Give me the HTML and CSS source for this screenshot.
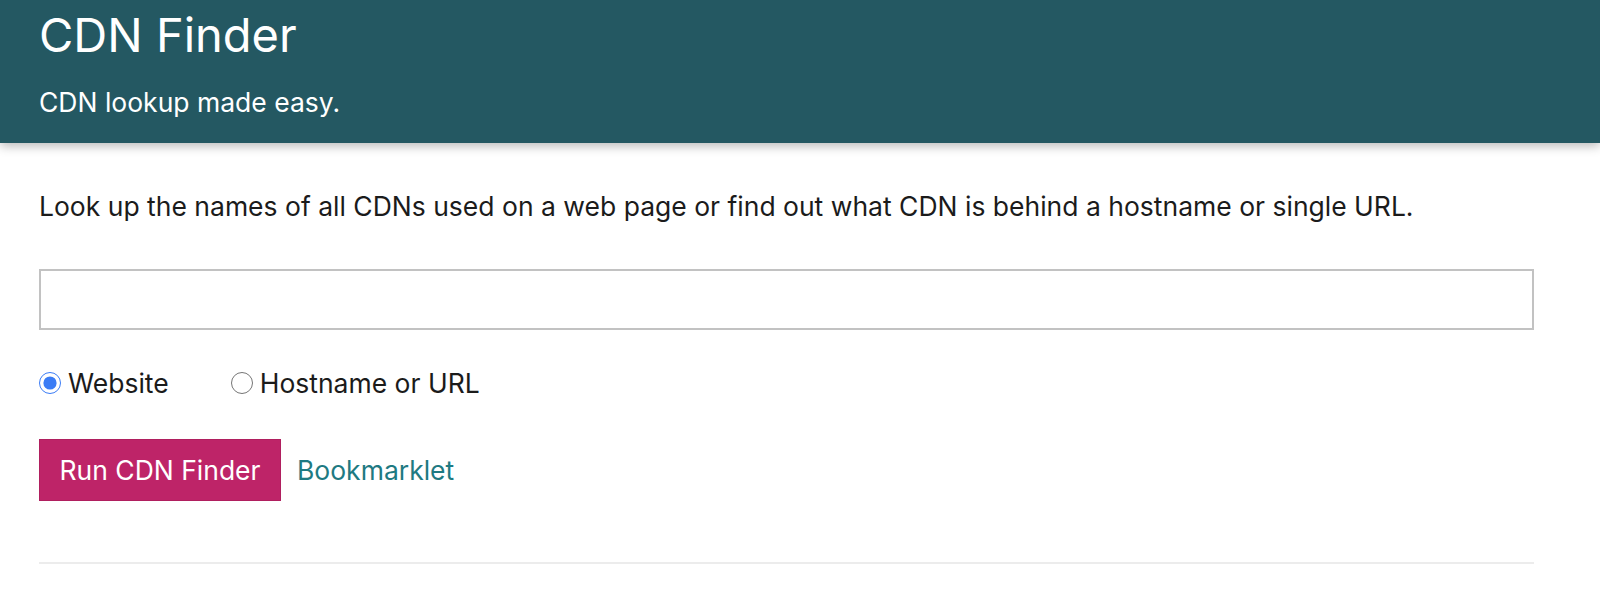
FILE: index.html
```html
<!DOCTYPE html>
<html lang="en">
<head>
<meta charset="utf-8">
<title>CDN Finder</title>
<link rel="stylesheet" href="styles.css">
</head>
<body>
<header class="site-header">
  <div class="wrap">
    <h1 class="title">CDN Finder</h1>
    <p class="tagline">CDN lookup made easy.</p>
  </div>
</header>
<main class="wrap content">
  <p class="intro">Look up the names of all CDNs used on a web page or find out what CDN is behind a hostname or single URL.</p>
  <form class="finder">
    <input class="url-input" type="text" aria-label="URL">
    <div class="modes">
      <label class="mode"><input type="radio" name="mode" checked> Website</label>
      <label class="mode"><input type="radio" name="mode"> Hostname or URL</label>
    </div>
    <div class="actions">
      <button type="button" class="run">Run CDN Finder</button>
      <a class="bookmarklet" href="#">Bookmarklet</a>
    </div>
  </form>
  <hr class="divider">
</main>
</body>
</html>
```
FILE: styles.css
```css
html, body {
  margin: 0;
  padding: 0;
  background: #ffffff;
}
body {
  font-family: Inter, "Noto Sans", sans-serif;
  color: #1b1b1b;
  font-size: 26.5px;
  line-height: 40px;
}
.wrap {
  width: 1495px;
  margin-left: 39px;
}
.site-header {
  background: #245862;
  color: #ffffff;
  height: 143px;
  box-sizing: border-box;
  padding-top: 7px;
  box-shadow: 0 3px 10px rgba(0,0,0,0.28);
  position: relative;
}
.title {
  margin: 0;
  font-size: 47px;
  line-height: 56px;
  font-weight: 400;
}
.tagline {
  margin: 19px 0 0;
}
.content {
  padding-top: 43px;
}
.intro {
  margin: 0;
}
.finder {
  margin-top: 43px;
}
.url-input {
  display: block;
  box-sizing: border-box;
  width: 1495px;
  height: 61px;
  border: 2px solid #c2c2c2;
  border-radius: 0;
  margin: 0;
  padding: 0 12px;
  font: inherit;
}
.modes {
  display: flex;
  gap: 62px;
  margin-top: 33px;
}
.mode {
  display: flex;
  align-items: center;
  gap: 7px;
}
.mode input {
  margin: 0;
  width: 22px;
  height: 22px;
  accent-color: #3b7cf5;
}
.actions {
  display: flex;
  align-items: center;
  gap: 16px;
  margin-top: 36px;
}
.run {
  height: 62px;
  width: 242px;
  background: #be2468;
  color: #ffffff;
  border: 1px solid #b01f5f;
  font: inherit;
  padding: 0;
}
.bookmarklet {
  color: #1e7a82;
  text-decoration: none;
}
.divider {
  border: 0;
  border-top: 2px solid #ececec;
  margin: 61px 0 0;
}
```
